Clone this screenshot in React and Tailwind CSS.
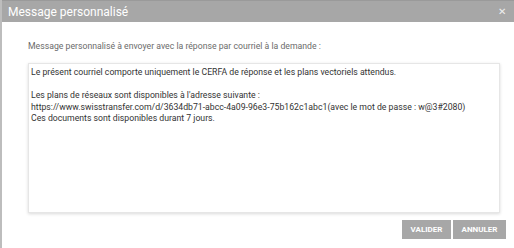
import React, { useState } from 'react';

const MESSAGE = `Le présent courriel comporte uniquement le CERFA de réponse et les plans vectoriels attendus.

Les plans de réseaux sont disponibles à l'adresse suivante :
https://www.swisstransfer.com/d/3634db71-abcc-4a09-96e3-75b162c1abc1(avec le mot de passe : w@3#2080)
Ces documents sont disponibles durant 7 jours.`;

const App = () => {
    const [message, setMessage] = useState(MESSAGE);

    return (
        <div className="w-[514px] h-[248px] overflow-hidden bg-white font-['Roboto',sans-serif]">
            <div className="flex flex-col h-full border-l-2 border-[#bdbdbd]">
                {/* Title bar */}
                <div className="flex items-center justify-between h-[22px] bg-[#a7a7a7] border-t border-[#9a9a9a] pl-[6px] pr-[8px] text-white">
                    <h1 className="text-[12px] leading-none">Message personnalisé</h1>
                    <button className="text-[10px] leading-none text-[#eeeeee]">✕</button>
                </div>

                {/* Body */}
                <div className="flex flex-col flex-1 pl-[26px] pr-[12px]">
                    <p className="mt-[19px] text-[8.7px] leading-[11px] text-[#6b6b6b]">
                        Message personnalisé à envoyer avec la réponse par courriel à la demande :
                    </p>
                    <textarea
                        value={message}
                        onChange={e => setMessage(e.target.value)}
                        className="mt-[11px] mr-[2px] h-[150px] resize-none border border-[#e6e6e6] shadow-[0_1px_3px_rgba(0,0,0,0.15)] px-[2px] pt-[3px] text-[8.7px] leading-[11.5px] text-[#333333] outline-none"
                    />
                    <div className="flex justify-end gap-[2px] mt-[7px] -mr-[4px]">
                        <button className="h-[19px] w-[49px] bg-[#a7a7a7] text-white text-[8px] font-bold">VALIDER</button>
                        <button className="h-[19px] w-[53px] bg-[#a7a7a7] text-white text-[8px] font-bold">ANNULER</button>
                    </div>
                </div>
            </div>
        </div>
    );
};

export default App;
